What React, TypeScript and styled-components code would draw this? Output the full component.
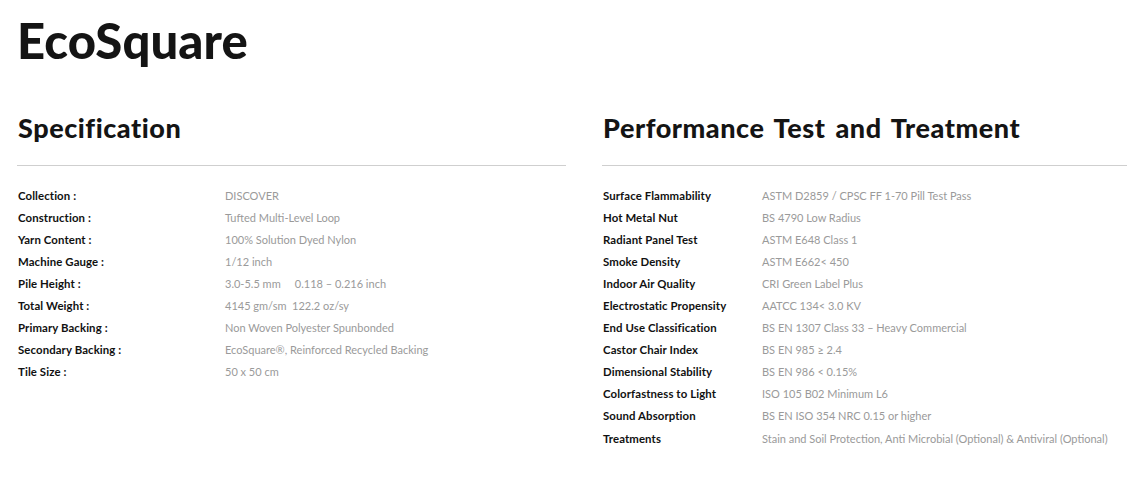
import React from "react";
import styled, { createGlobalStyle } from "styled-components";

const Global = createGlobalStyle`
  html, body { margin: 0; padding: 0; background: #fff; }
  body { font-family: "Lato", "Liberation Sans", sans-serif; color: #111; }
`;

const Page = styled.div`
  padding: 15px 0 0 17px;
  width: 1110px;
  box-sizing: border-box;
`;

const Title = styled.h1`
  margin: 0;
  font-family: "Lato", sans-serif;
  font-weight: 900;
  font-size: 49px;
  line-height: 50px;
  color: #141414;
  letter-spacing: 0.1px;
`;

const Columns = styled.div`
  display: grid;
  grid-template-columns: 549px 525px;
  column-gap: 36px;
  margin-top: 46px;
`;

const Section = styled.section`
  display: flex;
  flex-direction: column;
`;

const Heading = styled.h2`
  margin: 0 0 0 1px;
  font-family: "Lato", sans-serif;
  font-weight: 900;
  font-size: 27px;
  line-height: 34px;
  color: #141414;
  letter-spacing: 0.55px;
  word-spacing: 3px;
`;

const Divider = styled.hr`
  margin: 20px 0 0 0;
  border: 0;
  border-top: 1px solid #cfcfcf;
  height: 0;
`;

const Rows = styled.div`
  display: flex;
  flex-direction: column;
  padding-top: 18px;
`;

const Row = styled.div<{ $labelWidth: number }>`
  display: grid;
  grid-template-columns: ${(p) => p.$labelWidth}px 1fr;
  height: 22.1px;
  align-items: center;
  padding-left: 1px;
  font-size: 11px;
`;

const Label = styled.span`
  font-weight: 700;
  font-size: 11.4px;
  color: #111;
  letter-spacing: 0.1px;
`;

const Value = styled.span`
  color: #9a9a9a;
  white-space: pre;
`;

const spec: [string, string][] = [
  ["Collection :", "DISCOVER"],
  ["Construction :", "Tufted Multi-Level Loop"],
  ["Yarn Content :", "100% Solution Dyed Nylon"],
  ["Machine Gauge :", "1/12 inch"],
  ["Pile Height :", "3.0-5.5 mm     0.118 – 0.216 inch"],
  ["Total Weight :", "4145 gm/sm  122.2 oz/sy"],
  ["Primary Backing :", "Non Woven Polyester Spunbonded"],
  ["Secondary Backing :", "EcoSquare®, Reinforced Recycled Backing"],
  ["Tile Size :", "50 x 50 cm"],
];

const perf: [string, string][] = [
  ["Surface Flammability", "ASTM D2859 / CPSC FF 1-70 Pill Test Pass"],
  ["Hot Metal Nut", "BS 4790 Low Radius"],
  ["Radiant Panel Test", "ASTM E648 Class 1"],
  ["Smoke Density", "ASTM E662< 450"],
  ["Indoor Air Quality", "CRI Green Label Plus"],
  ["Electrostatic Propensity", "AATCC 134< 3.0 KV"],
  ["End Use Classification", "BS EN 1307 Class 33 – Heavy Commercial"],
  ["Castor Chair Index", "BS EN 985 ≥ 2.4"],
  ["Dimensional Stability", "BS EN 986 < 0.15%"],
  ["Colorfastness to Light", "ISO 105 B02 Minimum L6"],
  ["Sound Absorption", "BS EN ISO 354 NRC 0.15 or higher"],
  ["Treatments", "Stain and Soil Protection, Anti Microbial (Optional) & Antiviral (Optional)"],
];

export default function App() {
  return (
    <Page>
      <Global />
      <Title>EcoSquare</Title>
      <Columns>
        <Section>
          <Heading>Specification</Heading>
          <Divider />
          <Rows>
            {spec.map(([l, v]) => (
              <Row key={l} $labelWidth={207}>
                <Label>{l}</Label>
                <Value>{v}</Value>
              </Row>
            ))}
          </Rows>
        </Section>
        <Section>
          <Heading>Performance Test and Treatment</Heading>
          <Divider />
          <Rows>
            {perf.map(([l, v]) => (
              <Row key={l} $labelWidth={159}>
                <Label>{l}</Label>
                <Value>{v}</Value>
              </Row>
            ))}
          </Rows>
        </Section>
      </Columns>
    </Page>
  );
}
